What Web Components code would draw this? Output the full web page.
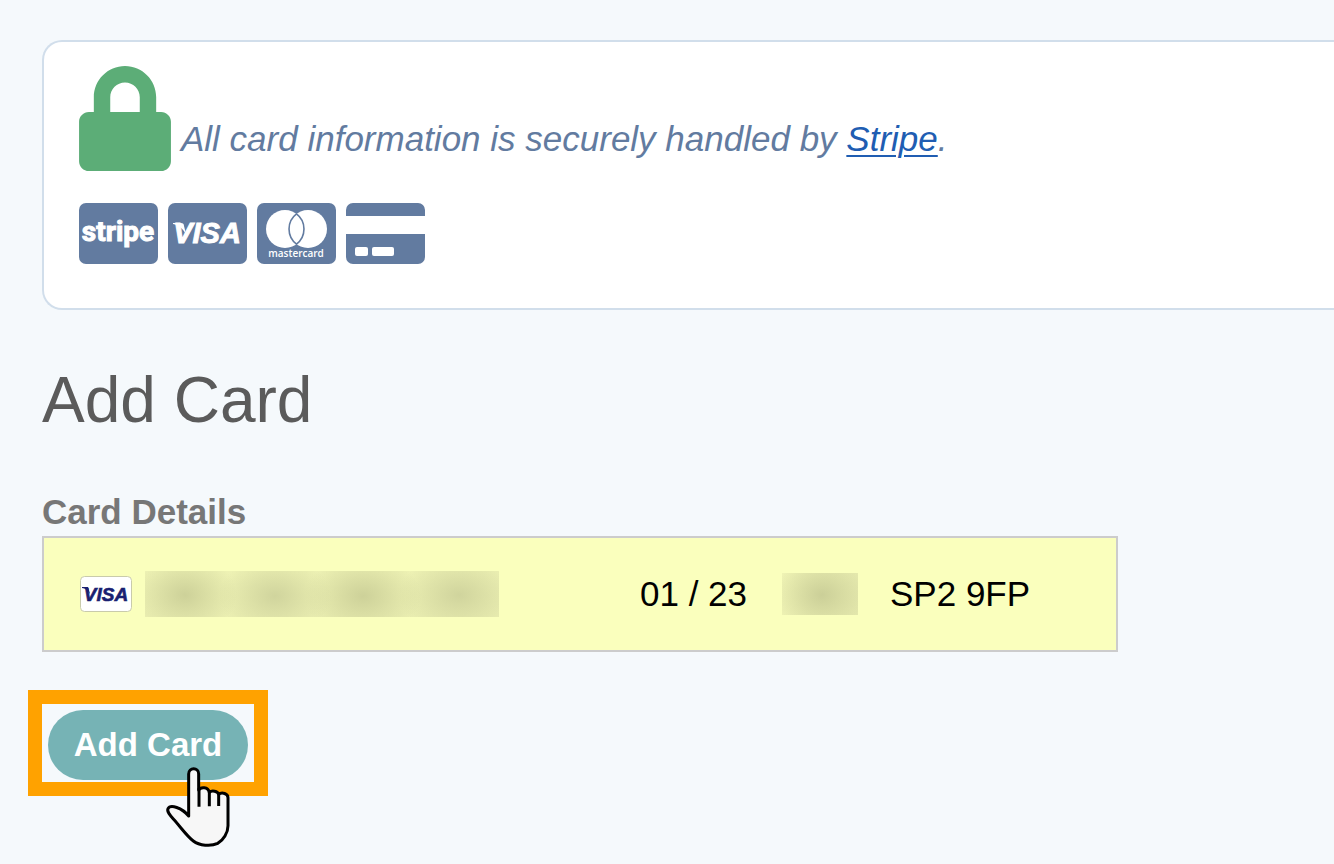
<!DOCTYPE html>
<html lang="en">
<head>
<meta charset="utf-8">
<title>Add Card</title>
<style>
  body { margin: 0; background: #f5f9fc; font-family: "Liberation Sans", Arial, Helvetica, sans-serif; }
</style>
</head>
<body>
<payment-page></payment-page>
<script>
const define = (name, html) => {
  const template = document.createElement('template');
  template.innerHTML = html;
  customElements.define(name, class extends HTMLElement {
    constructor() {
      super();
      this.attachShadow({ mode: 'open' }).append(template.content.cloneNode(true));
    }
  });
};

define('card-brands', `
  <style>
    :host { display: flex; gap: 10px; color: #627ba0; }
    svg { display: block; width: 79px; height: 61px; fill: currentColor; }
    text, .light { fill: #fff; }
    .stripe { font: 700 28px Roboto, sans-serif; stroke: #fff; }
    .visa { font: italic 700 29px "Liberation Sans", sans-serif; stroke: #fff; }
    .mc { font: 600 10px "Open Sans", sans-serif; }
  </style>
  <svg viewBox="0 0 79 61" role="img" aria-label="Stripe">
    <rect width="79" height="61" rx="7"/>
    <text class="stripe" x="39" y="38" text-anchor="middle">stripe</text>
  </svg>
  <svg viewBox="0 0 79 61" role="img" aria-label="Visa">
    <rect width="79" height="61" rx="7"/>
    <path class="light" d="M5 20h8c2 0 3 1 3 3l2 8c-3-5-7-9-13-10z"/>
    <text class="visa" x="39" y="40" text-anchor="middle">VISA</text>
  </svg>
  <svg viewBox="0 0 79 61" role="img" aria-label="Mastercard">
    <rect width="79" height="61" rx="7"/>
    <circle class="light" cx="28" cy="26" r="19"/>
    <circle class="light" cx="51" cy="26" r="19"/>
    <path d="M39.500 10.900a19 19 0 0 1 0 30.200a19 19 0 0 1 0-30.200z" fill="#fff" stroke="currentColor" stroke-width="1.600"/>
    <text class="mc" x="39" y="54" text-anchor="middle">mastercard</text>
  </svg>
  <svg viewBox="0 0 79 61" role="img" aria-label="Credit card">
    <path d="M0 13V7a7 7 0 0 1 7-7h65a7 7 0 0 1 7 7v6zM0 31h79v23a7 7 0 0 1-7 7H7a7 7 0 0 1-7-7z"/>
    <rect class="light" x="9" y="44" width="13" height="9" rx="2"/>
    <rect class="light" x="26" y="44" width="22" height="9" rx="2"/>
  </svg>
`);

define('security-notice', `
  <style>
    :host { display: block; padding: 24px 35px 44px; background: #fff; border: 2px solid #d1deeb; border-right: 0; border-radius: 20px 0 0 20px; }
    .message { display: flex; align-items: flex-end; gap: 10px; margin: 0 0 32px; color: #627ba0; font-size: 35px; line-height: 64px; font-style: italic; }
    svg { flex: none; width: 92px; height: 105px; fill: #5cad77; }
    a { color: #205db2; text-decoration-thickness: 2px; text-underline-offset: 4px; }
  </style>
  <p class="message">
    <svg viewBox="0 0 448 512" aria-hidden="true"><path d="M400 224h-24v-72C376 68.200 307.800 0 224 0S72 68.200 72 152v72H48c-26.500 0-48 21.500-48 48v192c0 26.500 21.500 48 48 48h352c26.500 0 48-21.500 48-48V272c0-26.500-21.500-48-48-48zm-104 0H152v-72c0-39.700 32.300-72 72-72s72 32.300 72 72v72z"/></svg>
    <span><slot></slot> <a href="https://stripe.com">Stripe</a>.</span>
  </p>
  <card-brands></card-brands>
`);

define('card-field', `
  <style>
    :host { display: block; }
    label { display: block; margin-bottom: 4px; color: #777; font-size: 35px; line-height: 40px; font-weight: bold; }
    .box { box-sizing: border-box; display: flex; align-items: center; max-width: 1076px; height: 116px; padding: 0 36px; background: #faffbd; border: 2px solid #ccc; }
    svg { flex: none; width: 52px; height: 36px; margin-right: 13px; }
    svg text { font: italic 700 19px "Liberation Sans", sans-serif; fill: #1a1f71; stroke: #1a1f71; stroke-width: .6px; }
    input { box-sizing: border-box; min-width: 0; height: 46px; margin: 0; padding: 0; border: 0; outline: 0; background: none; color: #000; font: 35px "Liberation Sans", Arial, sans-serif; }
    .number { flex: 1; margin-right: 32px; background:
      radial-gradient(ellipse 52px 40px at 40px 24px, #cdd199, #cdd19900) no-repeat 0 0 / 354px 46px,
      radial-gradient(ellipse 56px 40px at 130px 25px, #d0d49d, #d0d49d00) no-repeat 0 0 / 354px 46px,
      radial-gradient(ellipse 58px 42px at 218px 25px, #cdd199, #cdd19900) no-repeat 0 0 / 354px 46px,
      radial-gradient(ellipse 60px 42px at 314px 24px, #d0d49d, #d0d49d00) no-repeat 0 0 / 354px 46px,
      linear-gradient(#eef2b4, #ebefb2) no-repeat 0 0 / 354px 46px; }
    .expiry { width: 110px; margin-right: 32px; }
    .cvc { width: 76px; height: 42px; margin-right: 32px; background: radial-gradient(ellipse 48px 40px at 40px 22px, #cbcf98, #cbcf9800), linear-gradient(100deg, #f0f4b5, #e6eaae); }
    .postcode { width: 190px; }
  </style>
  <label for="number"><slot></slot></label>
  <div class="box">
    <svg viewBox="0 0 52 36" role="img" aria-label="Visa">
      <rect x=".5" y=".5" width="51" height="35" rx="4" fill="#fff" stroke="#c9cbab"/>
      <path d="M2 11h6l2 7c-2-3-5-6-8-6z" fill="#1a1f71"/>
      <text x="26" y="25" text-anchor="middle">VISA</text>
    </svg>
    <input class="number" id="number" inputmode="numeric">
    <input class="expiry" aria-label="Expiry date" value="01 / 23">
    <input class="cvc" aria-label="Security code" inputmode="numeric">
    <input class="postcode" aria-label="Postcode" value="SP2 9FP">
  </div>
`);

define('highlighted-button', `
  <style>
    :host { display: block; position: relative; width: fit-content; }
    button { display: block; min-width: 200px; height: 70px; padding: 0 24px; border: 0; border-radius: 35px; background: #76b3b5; color: #fff; font: bold 33px "Liberation Sans", Arial, sans-serif; cursor: pointer; }
    .frame { position: absolute; inset: -20px -20px -16px; border: 14px solid #ffa200; pointer-events: none; }
    svg { position: absolute; left: 107px; top: 50px; width: 90px; height: 95px; pointer-events: none; }
  </style>
  <button type="submit"><slot></slot></button>
  <div class="frame"></div>
  <svg viewBox="0 0 270 285" fill="#f7f7f7" stroke="#000" stroke-width="9" stroke-linejoin="round" aria-hidden="true">
    <path d="M101 168V42C101 21 131 21 131 42V90C137 80 159 80 163 97C171 90 188 94 191 103C201 95 219 101 219 113V197C219 218 205 241 188 250C168 260 133 257 115 243C96 229 77 201 55 177C45 166 35 155 39 146C46 132 81 143 101 168z"/>
    <path d="M132 85v55M163 94v45M191 100v38" fill="none" stroke-width="9"/>
  </svg>
`);

define('payment-page', `
  <style>
    :host { display: block; box-sizing: border-box; min-height: 100vh; padding: 40px 0 84px 42px; }
    h1 { margin: 54px 0 56px; color: #5b5b5b; font-size: 64px; line-height: 72px; font-weight: normal; }
    form { margin: 0 42px 0 0; }
    highlighted-button { margin: 58px 0 0 6px; }
  </style>
  <security-notice>All card information is securely handled by</security-notice>
  <h1>Add Card</h1>
  <form>
    <card-field>Card Details</card-field>
    <highlighted-button>Add Card</highlighted-button>
  </form>
`);
</script>
</body>
</html>
